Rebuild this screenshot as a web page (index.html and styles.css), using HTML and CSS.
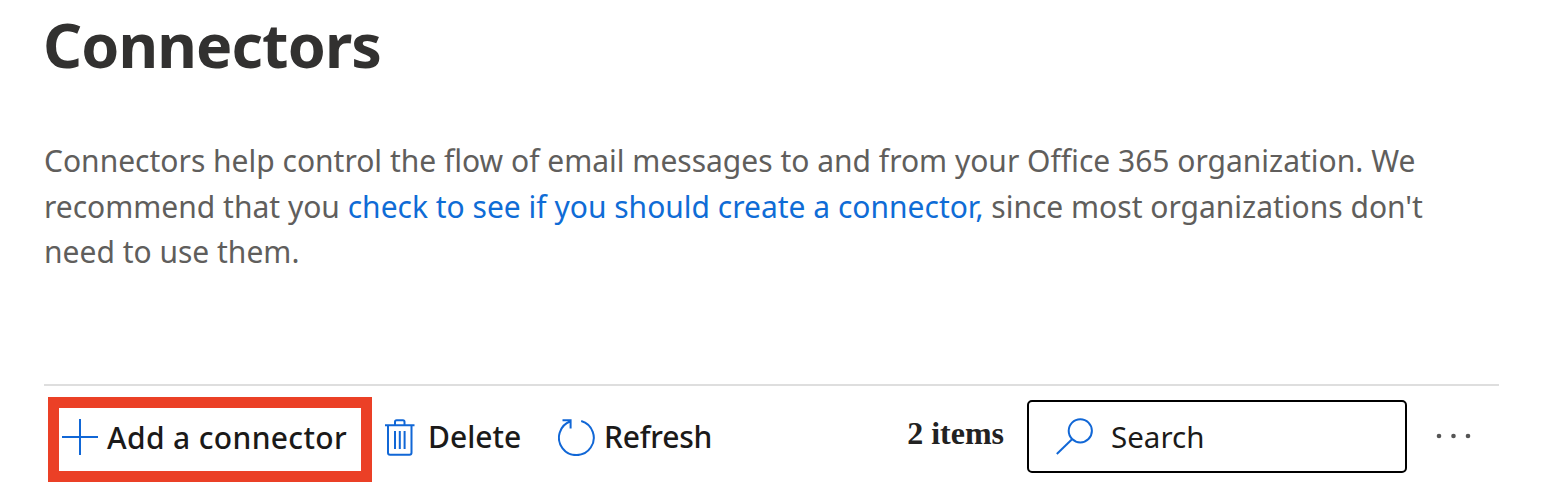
FILE: index.html
```html
<!DOCTYPE html>
<html lang="en">
<head>
    <meta charset="utf-8">
    <title>Connectors</title>
    <link rel="stylesheet" href="styles.css">
</head>
<body>
    <div class="page">
        <h1>Connectors</h1>

        <p class="description">
            <span class="line">Connectors help control the flow of email messages to and from your Office 365 organization. We</span>
            <span class="line">recommend that you <a href="#">check to see if you should create a connector,</a> since most organizations don't</span>
            <span class="line">need to use them.</span>
        </p>

        <!-- Command bar -->
        <div class="toolbar">
            <button type="button" class="command add-btn">
                <svg class="icon" width="36" height="37" viewBox="0 0 36 37">
                    <path d="M18 0V36M0 18H36"/>
                </svg>
                <span class="label add-label">Add a connector</span>
            </button>
            <button type="button" class="command delete-btn">
                <svg class="icon" width="30" height="37" viewBox="0 0 30 37">
                    <path d="M0 6.2H29.5M10 6V2.8Q10 1.2 11.6 1.2H17.9Q19.5 1.2 19.5 2.8V6M3 6.2V33.8Q3 35.8 5 35.8H24.5Q26.5 35.8 26.5 33.8V6.2M10 12V30M14.8 12V30M19.6 12V30"/>
                </svg>
                <span class="label delete-label">Delete</span>
            </button>
            <button type="button" class="command refresh-btn">
                <svg class="icon" width="37" height="37" viewBox="0 0 37 37">
                    <path d="M23.2 2A17.4 17.4 0 1 1 12.6 2.3M4.5 1.2H12.6V9.4"/>
                </svg>
                <span class="label refresh-label">Refresh</span>
            </button>

            <div class="item-count">2 items</div>
            <div class="search-box">
                <svg class="icon" width="37" height="37" viewBox="0 0 37 37">
                    <circle cx="24.3" cy="12.8" r="11.6"/>
                    <path d="M16 21.2L0.8 36"/>
                </svg>
                <span class="search-text">Search</span>
            </div>
            <button type="button" class="command more-btn" aria-label="More">
                <svg width="36" height="6" viewBox="0 0 36 6">
                    <circle cx="3" cy="3" r="2.3"/>
                    <circle cx="17.5" cy="3" r="2.3"/>
                    <circle cx="32" cy="3" r="2.3"/>
                </svg>
            </button>
        </div>
    </div>
</body>
</html>
```
FILE: styles.css
```css
body {
    margin: 0;
    background: #fff;
    font-family: "Segoe UI", "Noto Sans", sans-serif;
    overflow: hidden;
}
.page {
    width: 1455px;
    padding: 15px 0 0 44px;
}
h1 {
    margin: 0 0 0 -1px;
    font-size: 61px;
    line-height: 60px;
    font-weight: 700;
    letter-spacing: -0.9px;
    color: #323130;
}
.description {
    margin: 63px 0 0;
    font-size: 30px;
    line-height: 45.5px;
    color: #605e5c;
}
.line {
    display: block;
    white-space: nowrap;
}
a {
    color: #0f6cd6;
    text-decoration: none;
}
.toolbar {
    display: flex;
    align-items: flex-start;
    height: 106px;
    margin-top: 109.5px;
    border-top: 2px solid #dedede;
    box-sizing: border-box;
}
.command {
    display: flex;
    align-items: center;
    height: 73px;
    margin-top: 14px;
    padding: 0;
    border: none;
    background: none;
    font-family: inherit;
    font-size: 30px;
    font-weight: 500;
    line-height: 40px;
    color: #1b1a19;
    white-space: nowrap;
}
.icon {
    flex: none;
    fill: none;
    stroke: #1167d6;
    stroke-width: 2;
}
.add-btn {
    width: 324px;
    height: 85px;
    margin-top: 11px;
    margin-left: 4px;
    padding: 0 0 4px 3px;
    border: 11px solid #eb4026;
    box-sizing: border-box;
}
.label {
    margin-left: 9px;
}
.add-label {
    letter-spacing: 0.35px;
}
.delete-btn {
    width: 172px;
    padding: 1px 0 0 13px;
    box-sizing: border-box;
}
.delete-label {
    margin-left: 13px;
}
.refresh-btn {
    margin-left: 14px;
    padding-top: 1px;
    box-sizing: border-box;
}
.refresh-label {
    letter-spacing: -0.2px;
}
.item-count {
    margin-top: 29px;
    margin-left: auto;
    margin-right: 23px;
    font-family: "Times New Roman", "Liberation Serif", serif;
    font-size: 32px;
    line-height: 37px;
    font-weight: 700;
    color: #222;
    white-space: nowrap;
}
.search-box {
    display: flex;
    align-items: center;
    width: 380px;
    height: 73px;
    margin-top: 14px;
    padding-left: 27px;
    border: 2px solid #000;
    border-radius: 5px;
    box-sizing: border-box;
    font-size: 29.5px;
    line-height: 40px;
    color: #1b1a19;
}
.search-text {
    margin-left: 18px;
}
.more-btn {
    margin-right: 27px;
    margin-left: 29px;
    padding-bottom: 2px;
    box-sizing: border-box;
}
.more-btn svg {
    fill: #555;
}
```
